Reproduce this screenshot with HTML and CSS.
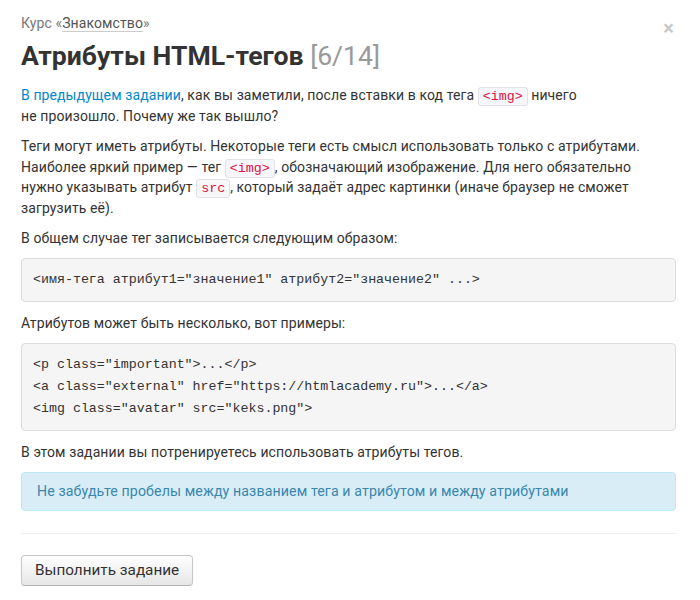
FILE: index.html
```html
<!DOCTYPE html>
<html lang="ru">
<head>
<meta charset="utf-8">
<link rel="stylesheet" href="styles.css">
</head>
<body>
<div class="modal">
  <div class="header">
    <span class="close">×</span>
    <div class="course">Курс «<span class="course-link">Знакомство</span>»</div>
    <h1 class="title">Атрибуты HTML-тегов <span class="count">[6/14]</span></h1>
  </div>
  <div class="body">
    <p><a class="link" href="#">В предыдущем задании</a>, как вы заметили, после вставки в код тега <code>&lt;img&gt;</code> ничего<br>не произошло. Почему же так вышло?</p>
    <p>Теги могут иметь атрибуты. Некоторые теги есть смысл использовать только с атрибутами. Наиболее яркий пример — тег <code>&lt;img&gt;</code>, обозначающий изображение. Для него обязательно нужно указывать атрибут <code>src</code>, который задаёт адрес картинки (иначе браузер не сможет загрузить её).</p>
    <p>В общем случае тег записывается следующим образом:</p>
    <pre>&lt;имя-тега атрибут1="значение1" атрибут2="значение2" ...&gt;</pre>
    <p>Атрибутов может быть несколько, вот примеры:</p>
    <pre>&lt;p class="important"&gt;...&lt;/p&gt;
&lt;a class="external" href="https://htmlacademy.ru"&gt;...&lt;/a&gt;
&lt;img class="avatar" src="keks.png"&gt;</pre>
    <p>В этом задании вы потренируетесь использовать атрибуты тегов.</p>
    <div class="alert">Не забудьте пробелы между названием тега и атрибутом и между атрибутами</div>
  </div>
  <div class="footer">
    <button class="btn">Выполнить задание</button>
  </div>
</div>
</body>
</html>
```
FILE: styles.css
```css
html, body {
  margin: 0;
  padding: 0;
  background: #fff;
}
body {
  font-family: Roboto, "Liberation Sans", sans-serif;
  font-size: 14px;
  line-height: 20.7px;
  letter-spacing: 0.1px;
  color: #333;
}
.modal {
  padding: 12px 24px 0 21px;
}
.header {
  position: relative;
}
.close {
  position: absolute;
  right: 2px;
  top: 6px;
  font-size: 20px;
  font-weight: bold;
  line-height: 20px;
  color: #c8c8c8;
}
.course {
  font-size: 14px;
  line-height: 22px;
  color: #777;
}
.course-link {
  color: #555;
  border-bottom: 1px solid #ccc;
}
.title {
  margin: 3px 0 0;
  font-size: 26.6px;
  line-height: 38px;
  font-weight: bold;
  letter-spacing: 0;
  color: #333;
}
.count {
  font-weight: normal;
  color: #999;
}
.body {
  padding-top: 10px;
}
p {
  margin: 0 0 9.5px;
}
.link {
  color: #0088cc;
  text-decoration: none;
}
code {
  font-family: "Liberation Mono", monospace;
  font-size: 13.3px;
  line-height: 12px;
  letter-spacing: 0;
  color: #dd1144;
  background: #f7f7f9;
  border: 1px solid #e1e1e8;
  border-radius: 3px;
  padding: 1px 4px;
}
pre {
  margin: 0 0 11px;
  padding: 10px 11px;
  font-family: "Liberation Mono", monospace;
  font-size: 13.3px;
  line-height: 21.8px;
  letter-spacing: 0;
  color: #333;
  background: #f5f5f5;
  border: 1px solid #dcdcdc;
  border-radius: 4px;
  white-space: pre;
}
.alert {
  padding: 8px 15px;
  font-size: 14.2px;
  background: #d9edf7;
  border: 1px solid #bce8f1;
  border-radius: 4px;
  color: #3a87ad;
}
.footer {
  margin-top: 22px;
  border-top: 1px solid #eee;
  padding-top: 21px;
}
.btn {
  font-family: Roboto, "Liberation Sans", sans-serif;
  font-size: 15.3px;
  line-height: 19px;
  color: #333;
  padding: 5px 13px;
  background: linear-gradient(#ffffff, #e6e6e6);
  border: 1px solid #c8c8c8;
  border-bottom-color: #b3b3b3;
  border-radius: 4px;
  box-shadow: inset 0 1px 0 rgba(255,255,255,.2), 0 1px 2px rgba(0,0,0,.05);
}
```
